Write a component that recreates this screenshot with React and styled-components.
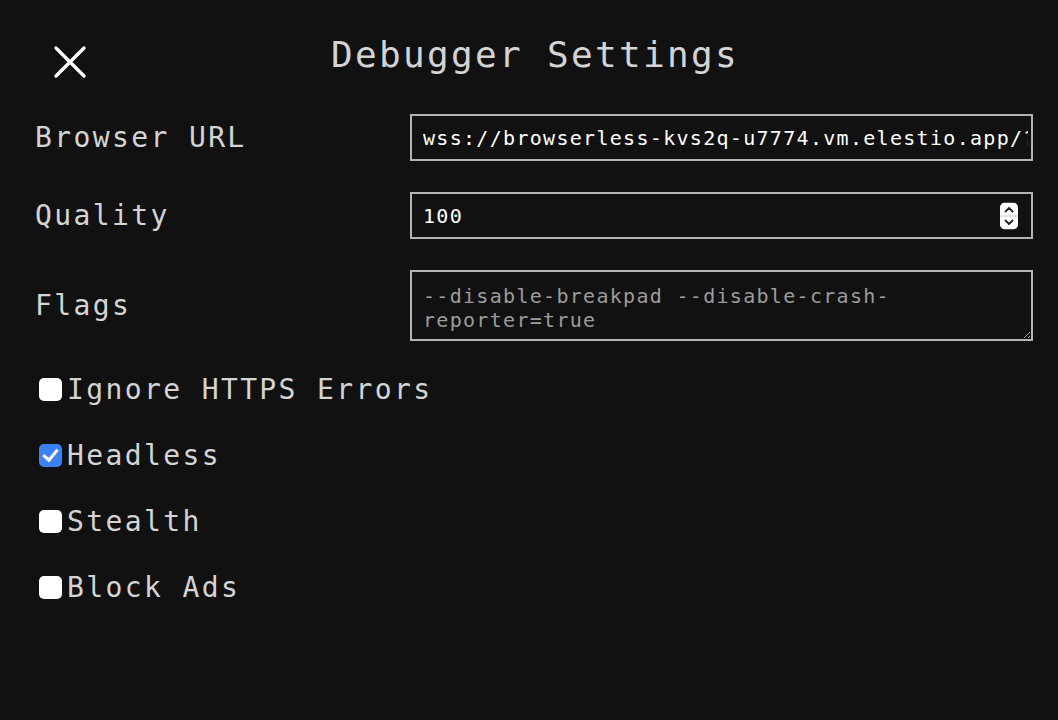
import React, { useState } from "react";
import styled, { createGlobalStyle } from "styled-components";

const GlobalStyle = createGlobalStyle`
  html, body {
    margin: 0;
    background: #111111;
  }
  body {
    font-family: "DejaVu Sans Mono", "Liberation Mono", monospace;
  }
`;

const Page = styled.div`
  min-height: 720px;
  background: #111111;
  color: #d4d4d4;
`;

const Header = styled.div`
  display: grid;
  grid-template-columns: 1fr auto 1fr;
  align-items: start;
  padding-top: 34px;
`;

const CloseBtn = styled.button`
  justify-self: start;
  margin: 10px 0 0 52px;
  padding: 0;
  width: 36px;
  height: 36px;
  border: none;
  background: transparent;
  cursor: pointer;
  svg {
    display: block;
  }
`;

const Title = styled.h1`
  margin: 0 0 0 12px;
  font-size: 36px;
  line-height: 42px;
  font-weight: normal;
  letter-spacing: 0.065em;
  color: #d4d4d4;
`;

const Form = styled.div`
  display: grid;
  grid-template-columns: 375px 1fr;
  row-gap: 31px;
  align-items: center;
  margin-top: 34px;
  padding: 0 25px 0 35px;
`;

const Label = styled.label`
  font-size: 28px;
  letter-spacing: 0.085em;
  color: #d4d4d4;
`;

const fieldStyle = `
  box-sizing: border-box;
  width: 100%;
  margin: 0;
  border: 2px solid #b4b4b4;
  border-radius: 0;
  background: #111111;
  color: #ffffff;
  font-family: "DejaVu Sans Mono", "Liberation Mono", monospace;
  font-size: 20px;
  letter-spacing: 0.065em;
  outline: none;
`;

const TextInput = styled.input`
  ${fieldStyle}
  height: 47px;
  padding: 0 3px 0 11px;
  -moz-appearance: textfield;
  &::-webkit-inner-spin-button,
  &::-webkit-outer-spin-button {
    -webkit-appearance: none;
    margin: 0;
  }
`;

const NumberWrap = styled.div`
  position: relative;
`;

const Spinner = styled.svg`
  position: absolute;
  right: 15px;
  top: 50%;
  transform: translateY(-50%);
  pointer-events: none;
`;

const FlagsArea = styled.textarea`
  ${fieldStyle}
  display: block;
  height: 71px;
  padding: 12px 11px 8px;
  line-height: 24px;
  resize: both;
  &::placeholder {
    color: #9c9c9c;
  }
`;

const Options = styled.div`
  display: flex;
  flex-direction: column;
  gap: 33px;
  margin-top: 32px;
  padding-left: 35px;
`;

const OptionRow = styled.label`
  display: flex;
  align-items: center;
  font-size: 28px;
  line-height: 33px;
  letter-spacing: 0.085em;
  color: #d4d4d4;
  cursor: pointer;
`;

const Check = styled.input.attrs({ type: "checkbox" })`
  appearance: none;
  -webkit-appearance: none;
  position: relative;
  width: 23px;
  height: 23px;
  margin: 0 5px 0 4px;
  border-radius: 5px;
  background: #ffffff;
  cursor: pointer;
  &:checked {
    background: #3b82f6;
  }
  &:checked::after {
    content: "";
    position: absolute;
    left: 7px;
    top: 2px;
    width: 6px;
    height: 12px;
    border-right: 3px solid #ffffff;
    border-bottom: 3px solid #ffffff;
    transform: rotate(40deg);
  }
`;

const options = [
  { key: "ignoreHttps", label: "Ignore HTTPS Errors" },
  { key: "headless", label: "Headless" },
  { key: "stealth", label: "Stealth" },
  { key: "blockAds", label: "Block Ads" },
];

const App = () => {
  const [url, setUrl] = useState(
    "wss://browserless-kvs2q-u7774.vm.elestio.app/?token=abc"
  );
  const [quality, setQuality] = useState(100);
  const [flags, setFlags] = useState("");
  const [checked, setChecked] = useState({
    ignoreHttps: false,
    headless: true,
    stealth: false,
    blockAds: false,
  });

  return (
    <Page>
      <GlobalStyle />
      <Header>
        <CloseBtn aria-label="Close">
          <svg width="36" height="36" viewBox="0 0 36 36">
            <path
              d="M4 4 L32 32 M32 4 L4 32"
              stroke="#ffffff"
              strokeWidth="3.4"
              strokeLinecap="round"
            />
          </svg>
        </CloseBtn>
        <Title>Debugger Settings</Title>
        <div />
      </Header>

      <Form>
        <Label htmlFor="url">Browser URL</Label>
        <TextInput
          id="url"
          type="text"
          value={url}
          onChange={(e) => setUrl(e.target.value)}
        />

        <Label htmlFor="quality">Quality</Label>
        <NumberWrap>
          <TextInput
            id="quality"
            type="number"
            value={quality}
            onChange={(e) => setQuality(e.target.value)}
          />
          <Spinner width="18" height="27" viewBox="0 0 18 27">
            <rect x="0" y="0" width="18" height="27" rx="5" fill="#ffffff" />
            <line x1="0" y1="13.5" x2="18" y2="13.5" stroke="#c8c8c8" strokeWidth="1" />
            <path
              d="M5.5 9 L9 5.5 L12.5 9"
              fill="none"
              stroke="#222"
              strokeWidth="1.8"
              strokeLinecap="round"
              strokeLinejoin="round"
            />
            <path
              d="M5.5 18 L9 21.5 L12.5 18"
              fill="none"
              stroke="#222"
              strokeWidth="1.8"
              strokeLinecap="round"
              strokeLinejoin="round"
            />
          </Spinner>
        </NumberWrap>

        <Label htmlFor="flags">Flags</Label>
        <FlagsArea
          id="flags"
          placeholder="--disable-breakpad --disable-crash-reporter=true"
          value={flags}
          onChange={(e) => setFlags(e.target.value)}
        />
      </Form>

      <Options>
        {options.map((o) => (
          <OptionRow key={o.key}>
            <Check
              checked={checked[o.key]}
              onChange={() =>
                setChecked({ ...checked, [o.key]: !checked[o.key] })
              }
            />
            {o.label}
          </OptionRow>
        ))}
      </Options>
    </Page>
  );
};

export default App;
